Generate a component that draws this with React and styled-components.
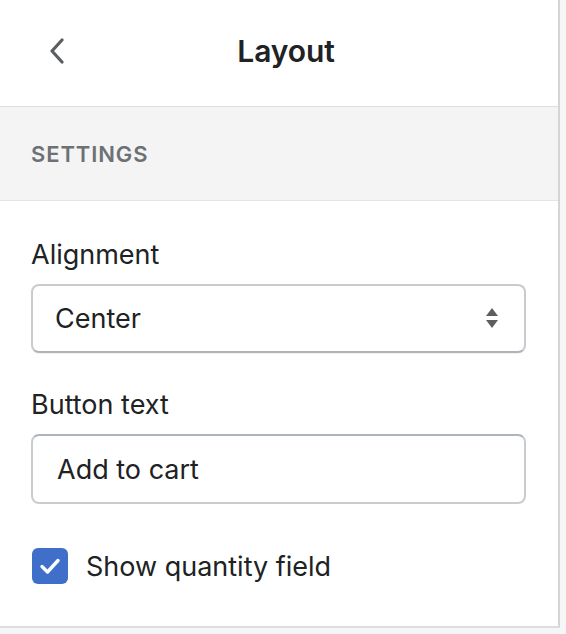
import React from "react";
import styled, { createGlobalStyle } from "styled-components";

const Global = createGlobalStyle`
  html, body { margin: 0; padding: 0; background: #f6f6f7; }
  body { font-family: Inter, "Noto Sans", "Liberation Sans", sans-serif; color: #202223; }
  * { box-sizing: border-box; }
`;

const Page = styled.div`
  display: flex;
  min-height: 634px;
  background: #f6f6f7;
`;

const Panel = styled.div`
  width: 560px;
  background: #ffffff;
  border-right: 2px solid #d4d5d7;
  display: flex;
  flex-direction: column;
  height: 628px;
  border-bottom: 2px solid #dcdddf;
`;

const Header = styled.header`
  height: 107px;
  display: grid;
  grid-template-columns: 1fr auto 1fr;
  align-items: center;
  padding-bottom: 4px;
  border-bottom: 1px solid #dcdddf;
  box-shadow: 0 1px 1px rgba(0, 0, 0, 0.04);
`;

const BackButton = styled.button`
  justify-self: start;
  margin-left: 40px;
  width: 34px;
  height: 40px;
  border: 0;
  background: transparent;
  display: flex;
  align-items: center;
  justify-content: center;
  padding: 0;
  color: #5c5f62;
`;

const Title = styled.h1`
  margin: 0;
  font-size: 30px;
  font-weight: 600;
  letter-spacing: -0.1px;
  color: #202223;
  padding-left: 14px;
`;

const SectionHead = styled.div`
  height: 94px;
  background: #f4f4f4;
  border-bottom: 1px solid #e3e4e6;
  display: flex;
  align-items: center;
  padding-left: 31px;
  font-size: 22px;
  font-weight: 600;
  letter-spacing: 0.9px;
  text-transform: uppercase;
  color: #6d7175;
`;

const Content = styled.div`
  flex: 1;
  padding: 36px 31px 0 31px;
  display: flex;
  flex-direction: column;
`;

const Field = styled.div`
  display: flex;
  flex-direction: column;
  margin-bottom: ${(p) => p.$gap || 0}px;
`;

const Label = styled.label`
  font-size: 27px;
  line-height: 36px;
  margin-bottom: 11px;
  color: #202223;
`;

const Box = styled.div`
  height: 69px;
  width: 495px;
  border: 2px solid #c9cccf;
  border-bottom-color: #aeb4b9;
  border-radius: 8px;
  display: flex;
  align-items: center;
  justify-content: space-between;
  padding: 0 26px 0 22px;
  font-size: 27px;
  color: #202223;
  background: #fff;
  box-shadow: 0 1px 0 rgba(22, 29, 37, 0.05);
`;

const InputBox = styled(Box)`
  height: 70px;
  border-color: #c9cccf;
  border-top-color: #aeb4b9;
  padding-left: 24px;
  box-shadow: none;
`;

const CheckRow = styled.label`
  display: flex;
  align-items: center;
  gap: 18px;
  font-size: 27px;
  color: #202223;
  margin-left: 1px;
`;

const CheckBox = styled.span`
  width: 36px;
  height: 36px;
  border-radius: 6px;
  background: #3f6fc9;
  display: flex;
  align-items: center;
  justify-content: center;
`;

const Chevron = () => (
  <svg width="16" height="26" viewBox="0 0 16 26" fill="none">
    <path d="M13 2 L3 13 L13 24" stroke="#5c5f62" strokeWidth="3.2" strokeLinecap="round" strokeLinejoin="round" />
  </svg>
);

const SelectArrows = () => (
  <svg width="12" height="21" viewBox="0 0 12 21">
    <path d="M6 0 L12 8 L0 8 Z" fill="#5c5f62" />
    <path d="M0 12 L12 12 L6 20 Z" fill="#5c5f62" />
  </svg>
);

const Tick = () => (
  <svg width="22" height="18" viewBox="0 0 22 18" fill="none">
    <path d="M3 9.5 L8.5 15 L19 3.5" stroke="#fff" strokeWidth="3.4" strokeLinecap="round" strokeLinejoin="round" />
  </svg>
);

export default function App() {
  return (
    <>
      <Global />
      <Page>
        <Panel>
          <Header>
            <BackButton aria-label="Back"><Chevron /></BackButton>
            <Title>Layout</Title>
            <span />
          </Header>
          <SectionHead>Settings</SectionHead>
          <Content>
            <Field $gap={34}>
              <Label>Alignment</Label>
              <Box>
                <span>Center</span>
                <SelectArrows />
              </Box>
            </Field>
            <Field $gap={44}>
              <Label>Button text</Label>
              <InputBox>Add to cart</InputBox>
            </Field>
            <CheckRow>
              <CheckBox><Tick /></CheckBox>
              <span>Show quantity field</span>
            </CheckRow>
          </Content>
        </Panel>
      </Page>
    </>
  );
}
